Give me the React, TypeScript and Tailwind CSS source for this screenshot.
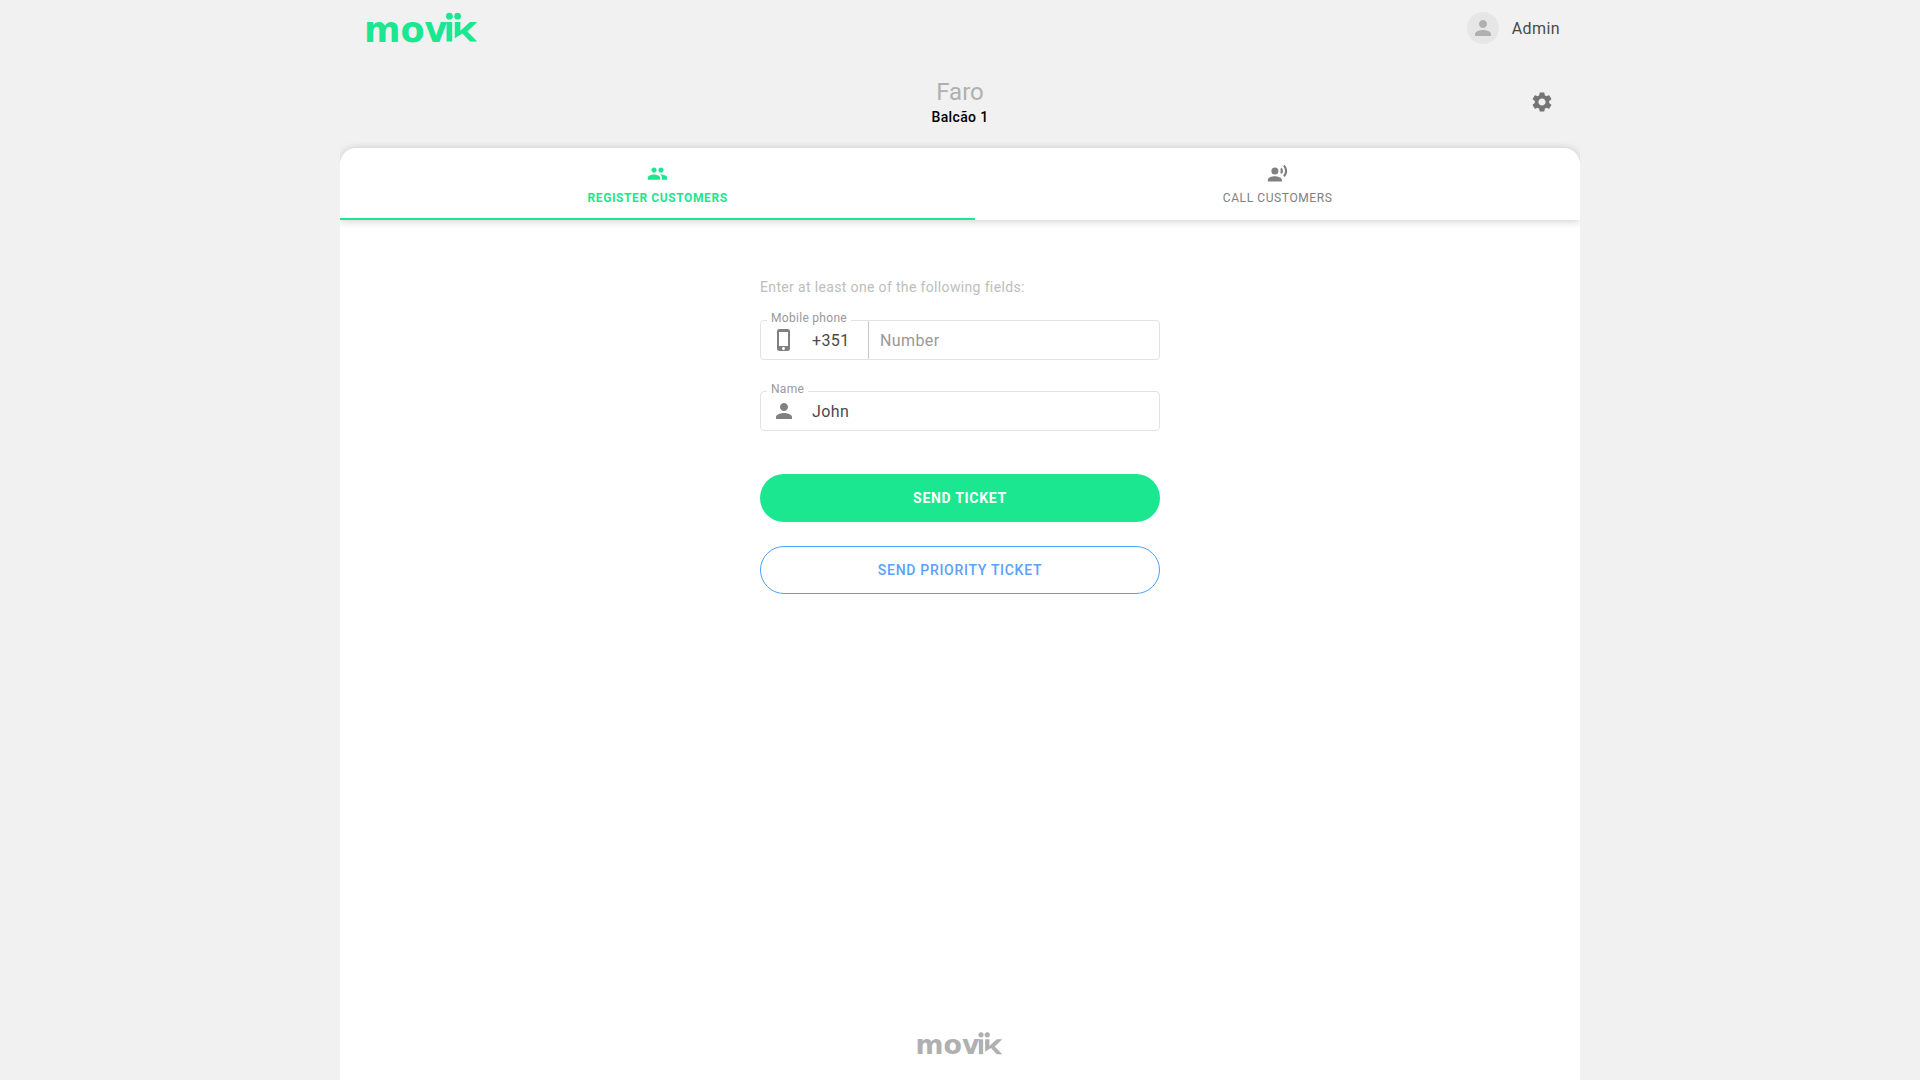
import React, { useState } from 'react';
import { MdPeople, MdPerson, MdPhoneIphone, MdRecordVoiceOver, MdSettings } from 'react-icons/md';

type Tab = 'register' | 'call';

function Logo({ className }: { className: string }) {
  return (
    <svg viewBox="-4 -6 120 44" fill="currentColor" className={className} role="img" aria-label="movik">
      <text x="-2" y="29.5" fontFamily="DejaVu Sans, sans-serif" fontWeight="700" fontSize="35">mov</text>
      <rect x="80.6" y="10" width="5.6" height="19.5" />
      <circle cx="83.4" cy="4.2" r="3.4" />
      <circle cx="91.6" cy="4.2" r="3.4" />
      <path d="M88.8 10h5.6v8.8l9.6-8.8h7.2L101.4 19.4l9.8 10.1h-7.2l-7.6-8-7.6 4.7z" />
    </svg>
  );
}

const tabs = [
  { id: 'register' as Tab, label: 'Register customers', icon: <MdPeople size={21} /> },
  { id: 'call' as Tab, label: 'Call customers', icon: <MdRecordVoiceOver size={21} /> },
];

function App() {
  const [tab, setTab] = useState<Tab>('register');
  const [phone, setPhone] = useState('');
  const [name, setName] = useState('John');

  return (
    <div className="min-h-screen bg-[#f1f1f1] font-['Roboto',sans-serif] text-[#4a4a4a]">
      <div className="mx-auto flex min-h-screen max-w-[1240px] flex-col overflow-hidden">
        <header className="flex h-14 items-center justify-between pl-[22px] pr-5">
          <a href="#" className="text-[#1ae78f]">
            <Logo className="w-[120px]" />
          </a>
          <button className="flex items-center gap-[13px] tracking-wide">
            <span className="flex h-8 w-8 items-center justify-center rounded-full bg-[#e6e6e6] text-[#b0b0b0]">
              <MdPerson size={24} />
            </span>
            <span className="pt-0.5">Admin</span>
          </button>
        </header>

        <div className="grid h-[92px] grid-cols-3 items-center px-[26px]">
          <div className="col-start-2 pb-0.5 text-center">
            <h1 className="text-2xl text-[#b0b0b0]">Faro</h1>
            <p className="text-sm leading-[18px] font-medium tracking-wide text-black">Balcão 1</p>
          </div>
          <button aria-label="Settings" className="justify-self-end text-[#757575]">
            <MdSettings size={24} />
          </button>
        </div>

        <nav role="tablist" className="relative z-10 flex h-[72px] rounded-t-2xl bg-white shadow-[0_1px_8px_rgba(0,0,0,0.2)]">
          {tabs.map((t) => (
            <button
              key={t.id}
              role="tab"
              aria-selected={tab === t.id}
              onClick={() => setTab(t.id)}
              className={`flex flex-auto flex-col items-center justify-center gap-1.5 border-b-2 pt-0.5 text-xs tracking-wider uppercase ${tab === t.id ? 'border-[#1ae78f] font-bold text-[#1ae78f]' : 'border-transparent text-[#808080]'}`}
            >
              {t.icon}
              {t.label}
            </button>
          ))}
        </nav>

        <main className="flex flex-1 flex-col items-center bg-white px-4 pt-[57px]">
          <form className="flex w-full max-w-[400px] flex-col" onSubmit={(e) => e.preventDefault()}>
            <p className="text-sm leading-5 tracking-wide text-[#bdbdbd]">Enter at least one of the following fields:</p>

            <div className="relative mt-[23px] flex h-10 items-center rounded border border-[#e2e2e2]">
              <label htmlFor="phone" className="absolute -top-[13px] left-1.5 bg-white px-1 text-xs leading-5 tracking-wide text-[#999]">
                Mobile phone
              </label>
              <MdPhoneIphone size={24} className="ml-[11px] shrink-0 text-[#808080]" />
              <span className="ml-4 w-14 shrink-0 pt-0.5 tracking-wide">+351</span>
              <input
                id="phone"
                type="tel"
                placeholder="Number"
                value={phone}
                onChange={(e) => setPhone(e.target.value)}
                className="h-full min-w-0 flex-1 border-l border-[#c8c8c8] pl-[11px] tracking-wide outline-none placeholder:text-[#999]"
              />
            </div>

            <div className="relative mt-[31px] flex h-10 items-center rounded border border-[#e2e2e2]">
              <label htmlFor="name" className="absolute -top-[13px] left-1.5 bg-white px-1 text-xs leading-5 tracking-wide text-[#999]">
                Name
              </label>
              <MdPerson size={24} className="ml-[11px] shrink-0 text-[#808080]" />
              <input
                id="name"
                type="text"
                value={name}
                onChange={(e) => setName(e.target.value)}
                className="h-full min-w-0 flex-1 pl-4 tracking-wide outline-none"
              />
            </div>

            <button type="submit" className="mt-[43px] h-12 rounded-full bg-[#1ae78f] text-sm font-bold tracking-wider text-white uppercase">
              Send ticket
            </button>
            <button type="button" className="mt-6 h-12 rounded-full border border-[#4ba3fb] text-sm font-medium tracking-wider text-[#5aa2fa] uppercase">
              Send priority ticket
            </button>
          </form>

          <footer className="mt-auto pt-10 pb-[19px] text-[#b0b0b0]">
            <Logo className="w-[92px]" />
          </footer>
        </main>
      </div>
    </div>
  );
}

export default App;
